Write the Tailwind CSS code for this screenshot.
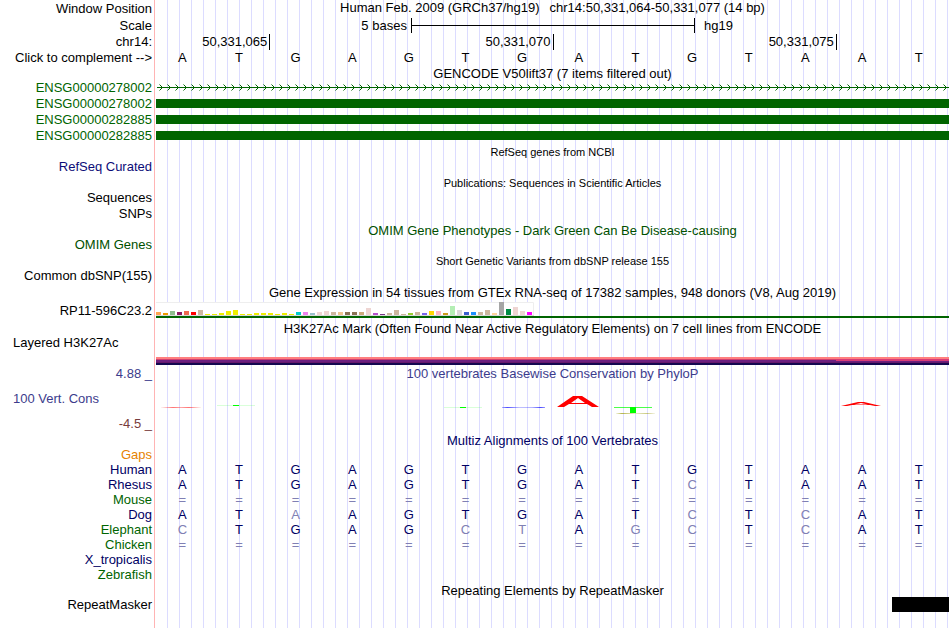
<!DOCTYPE html>
<html lang="en">
<head>
    <meta charset="UTF-8">
    <meta name="viewport" content="width=device-width, initial-scale=1.0">
    <script src="https://cdn.jsdelivr.net/npm/@tailwindcss/browser@4"></script>
    <title>Human chr14:50,331,064-50,331,077 - Genome Browser</title>
</head>
<body class="bg-white">
<main class="min-h-screen overflow-hidden font-['Liberation_Sans',Arial,sans-serif] text-[13px] leading-[15px] text-black bg-[linear-gradient(to_right,#fff_154px,#ffb4b4_154px_155px,#fff_155px_156px,transparent_156px),repeating-linear-gradient(to_right,transparent_0_11px,#dcdcff_11px_12px)]">

    <!-- Ruler -->
    <div class="flex h-[17px] items-start">
        <div class="w-[152px] shrink-0 text-right leading-[17px]">Window Position</div>
        <h1 class="ml-1 mr-px flex flex-1 justify-center gap-2.5 whitespace-nowrap"><span>Human Feb. 2009 (GRCh37/hg19)</span><span>chr14:50,331,064-50,331,077 (14 bp)</span></h1>
    </div>
    <div class="flex h-[17px] items-center">
        <div class="w-[152px] shrink-0 text-right">Scale</div>
        <div class="ml-1 mr-px grid flex-1 grid-cols-28 items-center">
            <span class="col-span-9 pr-1 text-right">5 bases</span>
            <span class="col-span-10 -mr-px flex h-[15px] items-center border-x border-black"><span class="h-px w-full bg-black"></span></span>
            <span class="col-span-9 pl-2.5">hg19</span>
        </div>
    </div>
    <div class="flex h-4 items-start">
        <div class="w-[152px] shrink-0 text-right leading-4">chr14:</div>
        <div class="ml-1 mr-px grid flex-1 grid-cols-14 text-right">
            <span class="col-span-2 -mr-px border-r border-black pr-0.5 leading-4">50,331,065</span>
            <span class="col-span-5 -mr-px border-r border-black pr-0.5 leading-4">50,331,070</span>
            <span class="col-span-5 -mr-px border-r border-black pr-0.5 leading-4">50,331,075</span>
        </div>
    </div>
    <div class="flex h-[15px] items-center">
        <div class="w-[152px] shrink-0 text-right"><button type="button" class="cursor-pointer">Click to complement --&gt;</button></div>
        <div class="ml-0.5 mr-[3px] grid flex-1 grid-cols-14 text-center leading-[13px]" data-bases="ATGAGTGATGTAAT"></div>
    </div>

    <!-- GENCODE -->
    <h2 class="ml-[156px] mr-px h-[15px] text-center leading-[17px] whitespace-nowrap">GENCODE V50lift37 (7 items filtered out)</h2>
    <div class="text-[#006400]">
        <div class="flex h-4 items-start">
            <div class="w-[152px] shrink-0 text-right">ENSG00000278002</div>
            <svg class="ml-1 mr-px h-4 flex-1" aria-hidden="true">
                <defs>
                    <pattern id="strand" width="8" height="16" patternUnits="userSpaceOnUse">
                        <path d="M3.500 4.500l3 3-3 3" fill="none" stroke="#006400" stroke-width="1"/>
                    </pattern>
                </defs>
                <rect x="1" y="7" width="100%" height="1" fill="#006400"/>
                <rect width="100%" height="16" fill="url(#strand)"/>
            </svg>
        </div>
        <div class="flex h-4 items-start">
            <div class="w-[152px] shrink-0 text-right">ENSG00000278002</div>
            <div class="mt-[3px] mr-px ml-1 h-[9px] flex-1 bg-[#006400]"></div>
        </div>
        <div class="flex h-4 items-start">
            <div class="w-[152px] shrink-0 text-right">ENSG00000282885</div>
            <div class="mt-[3px] mr-px ml-1 h-[9px] flex-1 bg-[#006400]"></div>
        </div>
        <div class="flex h-4 items-start">
            <div class="w-[152px] shrink-0 text-right">ENSG00000282885</div>
            <div class="mt-[3px] mr-px ml-1 h-[9px] flex-1 bg-[#006400]"></div>
        </div>
    </div>

    <!-- Dense tracks with nothing in this window -->
    <h2 class="ml-[156px] mr-px h-[15px] text-center text-[11px] leading-4 whitespace-nowrap">RefSeq genes from NCBI</h2>
    <div class="h-4 w-[152px] text-right text-[#0c0c78]">RefSeq Curated</div>
    <h2 class="ml-[156px] mr-px h-[15px] text-center text-[11px] leading-4 whitespace-nowrap">Publications: Sequences in Scientific Articles</h2>
    <div class="h-4 w-[152px] text-right">Sequences</div>
    <div class="h-4 w-[152px] text-right">SNPs</div>
    <h2 class="ml-[156px] mr-px h-[15px] text-center leading-[17px] whitespace-nowrap text-[#005000]">OMIM Gene Phenotypes - Dark Green Can Be Disease-causing</h2>
    <div class="h-4 w-[152px] text-right text-[#005000]">OMIM Genes</div>
    <h2 class="ml-[156px] mr-px h-[15px] text-center text-[11px] leading-4 whitespace-nowrap">Short Genetic Variants from dbSNP release 155</h2>
    <div class="h-4 w-[152px] text-right">Common dbSNP(155)</div>

    <!-- GTEx -->
    <h2 class="ml-[156px] mr-px h-4 text-center leading-[17px] whitespace-nowrap">Gene Expression in 54 tissues from GTEx RNA-seq of 17382 samples, 948 donors (V8, Aug 2019)</h2>
    <div class="flex h-5 items-center">
        <div class="w-[152px] shrink-0 text-right">RP11-596C23.2</div>
        <svg class="ml-1 mr-px h-4 flex-1" aria-hidden="true">
            <rect width="378" height="14" fill="#fff"/>
            <path d="M0 .5h377.5V13.5H0" fill="none" stroke="#eee"/>
            <rect y="13" width="378" height="1" fill="#d8d8d8"/>
            <g id="gtex"></g>
            <rect y="14" width="100%" height="2" fill="#006400"/>
        </svg>
    </div>

    <!-- H3K27Ac -->
    <h2 class="ml-[156px] mr-px h-[15px] text-center leading-[17px] whitespace-nowrap">H3K27Ac Mark (Often Found Near Active Regulatory Elements) on 7 cell lines from ENCODE</h2>
    <div class="flex h-[31px]">
        <div class="w-[152px] shrink-0 pl-[13px]">Layered H3K27Ac</div>
        <div class="ml-1 mr-px mt-[22px] grid h-2 flex-1 grid-cols-14">
            <div class="col-span-12 bg-[linear-gradient(#ff7f7f_0_2px,#d04070_2px_3px,#6c2080_3px_5px,#66186c_5px_6px,#140850_6px_8px)]"></div>
            <div class="col-span-2 bg-[linear-gradient(#ff7f7f_0_2px,#d83c78_2px_4px,#6c2080_4px_5px,#66186c_5px_6px,#140850_6px_8px)]"></div>
        </div>
    </div>

    <!-- PhyloP -->
    <div class="flex h-4 items-start text-[#3c3c8c]">
        <div class="w-[152px] shrink-0 text-right">4.88 _</div>
        <h2 class="ml-1 mr-px flex-1 text-center leading-4 whitespace-nowrap">100 vertebrates Basewise Conservation by PhyloP</h2>
    </div>
    <div class="flex h-[50px]">
        <div class="flex w-[152px] shrink-0 flex-col justify-between pt-[9px] pb-px">
            <div class="pl-[13px] text-[#3c3c8c]">100 Vert. Cons</div>
            <div class="text-right text-[#783c3c]">-4.5 _</div>
        </div>
        <svg class="ml-1 mr-px h-[50px] flex-1" aria-hidden="true">
            <defs>
                <linearGradient id="fade-red"><stop offset="0" stop-color="#f00" stop-opacity=".05"/><stop offset=".3" stop-color="#f00" stop-opacity=".55"/><stop offset=".5" stop-color="#f00" stop-opacity=".35"/><stop offset=".7" stop-color="#f00" stop-opacity=".55"/><stop offset="1" stop-color="#f00" stop-opacity=".05"/></linearGradient>
                <linearGradient id="fade-blue"><stop offset="0" stop-color="#00f" stop-opacity=".3"/><stop offset=".12" stop-color="#00f" stop-opacity=".7"/><stop offset=".4" stop-color="#00f" stop-opacity=".25"/><stop offset=".7" stop-color="#00f" stop-opacity=".3"/><stop offset=".9" stop-color="#00f" stop-opacity=".7"/><stop offset="1" stop-color="#00f" stop-opacity=".4"/></linearGradient>
                <linearGradient id="fade-olive"><stop offset="0" stop-color="#990" stop-opacity=".1"/><stop offset=".15" stop-color="#990" stop-opacity=".7"/><stop offset=".5" stop-color="#990" stop-opacity=".2"/><stop offset=".8" stop-color="#990" stop-opacity=".5"/><stop offset="1" stop-color="#990" stop-opacity=".1"/></linearGradient>
            </defs>
            <rect x="5" y="25" width="40" height="1" fill="url(#fade-red)"/>
            <rect x="61" y="23" width="38" height="1" fill="#0f0" opacity=".15"/>
            <rect x="77" y="23" width="6" height="1" fill="#0f0"/>
            <rect x="288" y="25" width="38" height="1" fill="#0f0" opacity=".15"/>
            <rect x="304" y="25" width="6" height="1" fill="#0f0"/>
            <rect x="346" y="25" width="43" height="1" fill="url(#fade-blue)"/>
            <path fill="#f00" fill-rule="evenodd" d="M401 25L417 14h9l17 11h-7l-5-3h-18l-5 3zM415 21h14l-7-5z"/>
            <rect x="458" y="25" width="38" height="1" fill="#0f0" opacity=".7"/>
            <rect x="474" y="25" width="6" height="6" fill="#0f0"/>
            <rect x="460" y="31" width="39" height="1" fill="url(#fade-olive)"/>
            <path fill="#f00" fill-rule="evenodd" d="M685 24L702 20h6l17 4h-6l-5-1h-18l-5 1zM698 22.5h14l-7-1.500z"/>
        </svg>
    </div>

    <!-- Multiz -->
    <h2 class="ml-[156px] mr-px h-[15px] text-center leading-[17px] whitespace-nowrap text-[#000064]">Multiz Alignments of 100 Vertebrates</h2>
    <div class="pr-[3px]">
        <table class="w-full table-fixed text-center text-[#000064]">
            <tbody>
                <tr class="h-[15px]"><th scope="row" class="w-[154px] p-0 pr-0.5 text-right font-normal text-[#e68200]">Gaps</th><td colspan="14" class="p-0"></td></tr>
                <tr class="h-[15px]" data-bases="ATGAGTGATGTAAT"><th scope="row" class="p-0 pr-0.5 text-right font-normal">Human</th></tr>
                <tr class="h-[15px]" data-bases="ATGAGTGATcTAAT"><th scope="row" class="p-0 pr-0.5 text-right font-normal">Rhesus</th></tr>
                <tr class="h-[15px]" data-bases="=============="><th scope="row" class="p-0 pr-0.5 text-right font-normal text-[#006400]">Mouse</th></tr>
                <tr class="h-[15px]" data-bases="ATaAGTGATcTcAT"><th scope="row" class="p-0 pr-0.5 text-right font-normal">Dog</th></tr>
                <tr class="h-[15px]" data-bases="cTGAGctAgcTcAT"><th scope="row" class="p-0 pr-0.5 text-right font-normal text-[#006400]">Elephant</th></tr>
                <tr class="h-[15px]" data-bases="=============="><th scope="row" class="p-0 pr-0.5 text-right font-normal text-[#006400]">Chicken</th></tr>
                <tr class="h-[15px]"><th scope="row" class="p-0 pr-0.5 text-right font-normal">X_tropicalis</th><td colspan="14" class="p-0"></td></tr>
                <tr class="h-[15px]"><th scope="row" class="p-0 pr-0.5 text-right font-normal text-[#006400]">Zebrafish</th><td colspan="14" class="p-0"></td></tr>
            </tbody>
        </table>
    </div>

    <!-- RepeatMasker -->
    <h2 class="ml-[156px] mr-px h-[15px] text-center leading-[17px] whitespace-nowrap">Repeating Elements by RepeatMasker</h2>
    <div class="flex h-[15px]">
        <div class="w-[152px] shrink-0 text-right">RepeatMasker</div>
        <div class="ml-1 mr-px grid flex-1 grid-cols-14">
            <div class="col-start-14 bg-black"></div>
        </div>
    </div>
</main>

<script>
    // lower case = differs from the human base
    document.querySelectorAll('[data-bases]').forEach(function (row) {
        var tag = row.tagName === 'TR' ? 'td' : 'span';
        row.dataset.bases.split('').forEach(function (base) {
            var cell = document.createElement(tag);
            cell.textContent = base.toUpperCase();
            cell.className = base === base.toUpperCase() && base !== '=' ? 'p-0' : 'p-0 text-[#8080b4]';
            row.appendChild(cell);
        });
    });

    // [height, colour] for each tissue
    var tissues = [
        [3, '#ffa54f'], [2, '#ee9a00'], [4, '#8fbc8f'], [3, '#8b1c62'], [4, '#ee6a50'], [3, '#ff0000'],
        [5, '#cdb79e'], [1, '#eeee00'], [1, '#eeee00'], [2, '#eeee00'], [4, '#eeee00'], [5, '#eeee00'],
        [1, '#eeee00'], [1, '#eeee00'], [2, '#eeee00'], [2, '#eeee00'], [2, '#eeee00'], [1, '#eeee00'],
        [2, '#eeee00'], [1, '#eeee00'], [3, '#00cdcd'], [3, '#ee82ee'], [2, '#9ac0cd'], [3, '#eed5d2'],
        [4, '#eed5d2'], [3, '#cdb79e'], [3, '#eec591'], [3, '#8b7355'], [3, '#8b7355'], [3, '#cdaa7d'],
        [7, '#eed5d2'], [2, '#b452cd'], [1, '#7a378b'], [2, '#cdb79e'], [5, '#cdb79e'], [1, '#cdb79e'],
        [2, '#9acd32'], [3, '#cdb79e'], [2, '#7a67ee'], [4, '#ffd700'], [4, '#ffb6c1'], [2, '#cd9b1d'],
        [9, '#b4eeb4'], [5, '#d9d9d9'], [3, '#3a5fcd'], [3, '#1e90ff'], [3, '#cdb79e'], [5, '#cdb79e'],
        [2, '#ffd39b'], [13, '#a6a6a6'], [6, '#008b45'], [8, '#eed5d2'], [4, '#eed5d2'], [3, '#ff00ff']
    ];
    var gtex = document.getElementById('gtex');
    tissues.forEach(function (t, i) {
        var bar = document.createElementNS('http://www.w3.org/2000/svg', 'rect');
        bar.setAttribute('x', i * 7);
        bar.setAttribute('y', 13 - t[0]);
        bar.setAttribute('width', 5);
        bar.setAttribute('height', t[0]);
        bar.setAttribute('fill', t[1]);
        gtex.appendChild(bar);
    });
</script>
</body>
</html>
